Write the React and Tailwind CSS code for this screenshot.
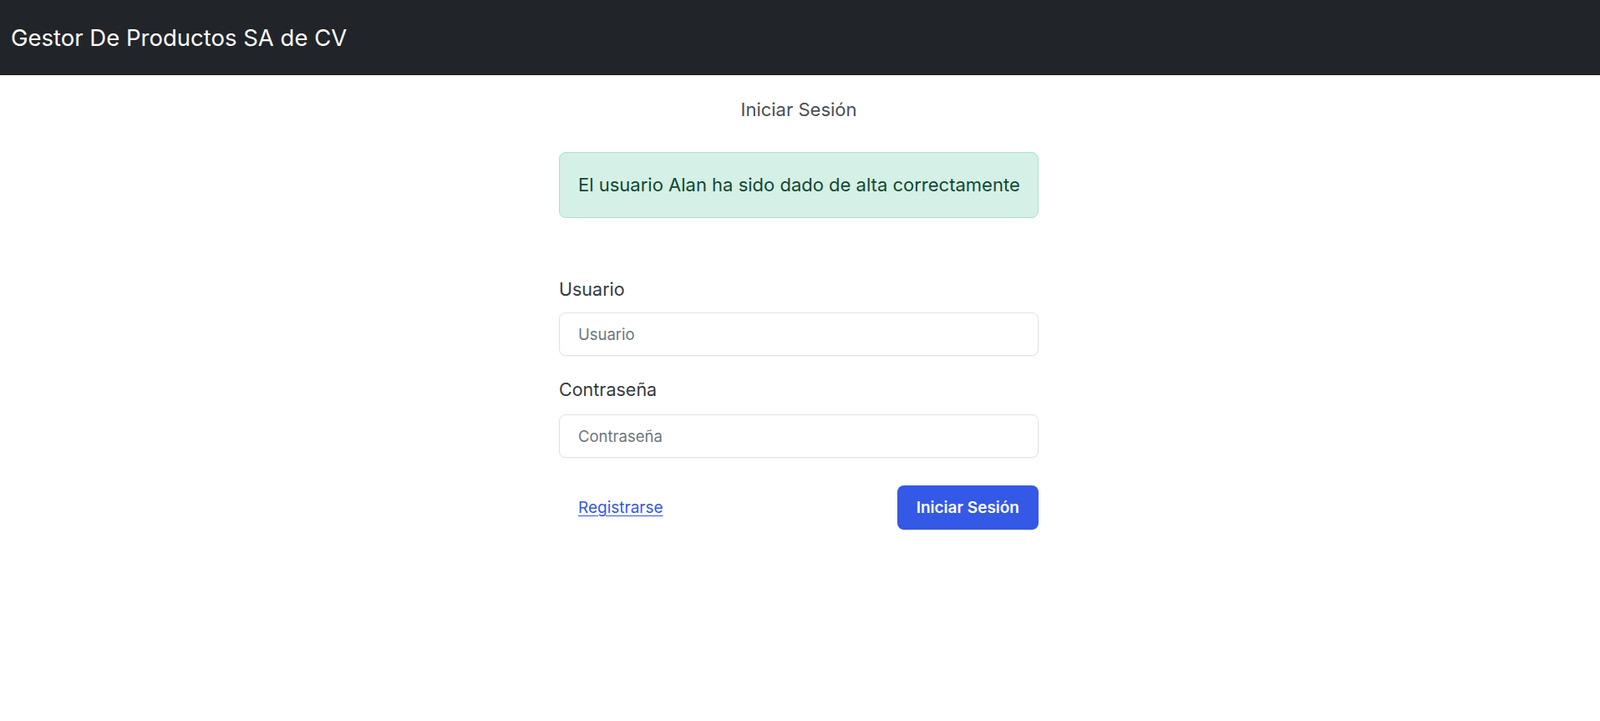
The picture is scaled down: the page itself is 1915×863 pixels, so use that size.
import React, { useState } from "react";

const App = () => {
  const [user, setUser] = useState("");
  const [pass, setPass] = useState("");

  return (
    <div className="min-h-screen bg-white" style={{ fontFamily: "Inter, 'Noto Sans', sans-serif" }}>
      <nav className="h-[90px] bg-[#212529] flex items-center px-[13px]">
        <span className="text-white text-[27.5px] leading-[40px]">Gestor De Productos SA de CV</span>
      </nav>

      <div className="flex justify-center pr-[3px]">
        <main className="w-[574px] pt-[25px]">
          <h1 className="text-center text-[22px] leading-[33px] text-[#495057]">Iniciar Sesión</h1>

          <div className="mt-[34px] rounded-[8px] border border-[#ace1cc] bg-[#d5f0e6] pl-[22px] pr-[20px] py-[22px] text-[22px] leading-[33px] whitespace-nowrap text-[#134833]">
            El usuario Alan ha sido dado de alta correctamente
          </div>

          <form className="mt-[69px]" onSubmit={(e) => e.preventDefault()}>
            <label className="block text-[21.5px] leading-[32px] text-[#343a40] mb-[12px]">Usuario</label>
            <input
              type="text"
              placeholder="Usuario"
              value={user}
              onChange={(e) => setUser(e.target.value)}
              className="block w-full rounded-[8px] border border-[#dee2e6] px-[22px] py-[12px] text-[18.5px] leading-[26px] text-[#495057] placeholder:text-[#6c757d] shadow-[0_1px_2px_rgba(0,0,0,0.05)] outline-none"
            />

            <label className="block mt-[24px] text-[21.5px] leading-[32px] text-[#343a40] mb-[14px]">Contraseña</label>
            <input
              type="password"
              placeholder="Contraseña"
              value={pass}
              onChange={(e) => setPass(e.target.value)}
              className="block w-full rounded-[8px] border border-[#dee2e6] px-[22px] py-[12px] text-[18.5px] leading-[26px] text-[#495057] placeholder:text-[#6c757d] shadow-[0_1px_2px_rgba(0,0,0,0.05)] outline-none"
            />

            <div className="mt-[33px] flex items-center justify-between">
              <a href="#" className="px-[23px] py-[13px] text-[19px] leading-[27px] text-[#3459e6] underline underline-offset-[3px]">
                Registrarse
              </a>
              <button
                type="submit"
                className="rounded-[8px] bg-[#3459e6] px-[23px] py-[13px] text-[19px] leading-[27px] font-semibold text-white shadow-[0_1px_2px_rgba(0,0,0,0.1)]"
              >
                Iniciar Sesión
              </button>
            </div>
          </form>
        </main>
      </div>
    </div>
  );
};

export default App;
